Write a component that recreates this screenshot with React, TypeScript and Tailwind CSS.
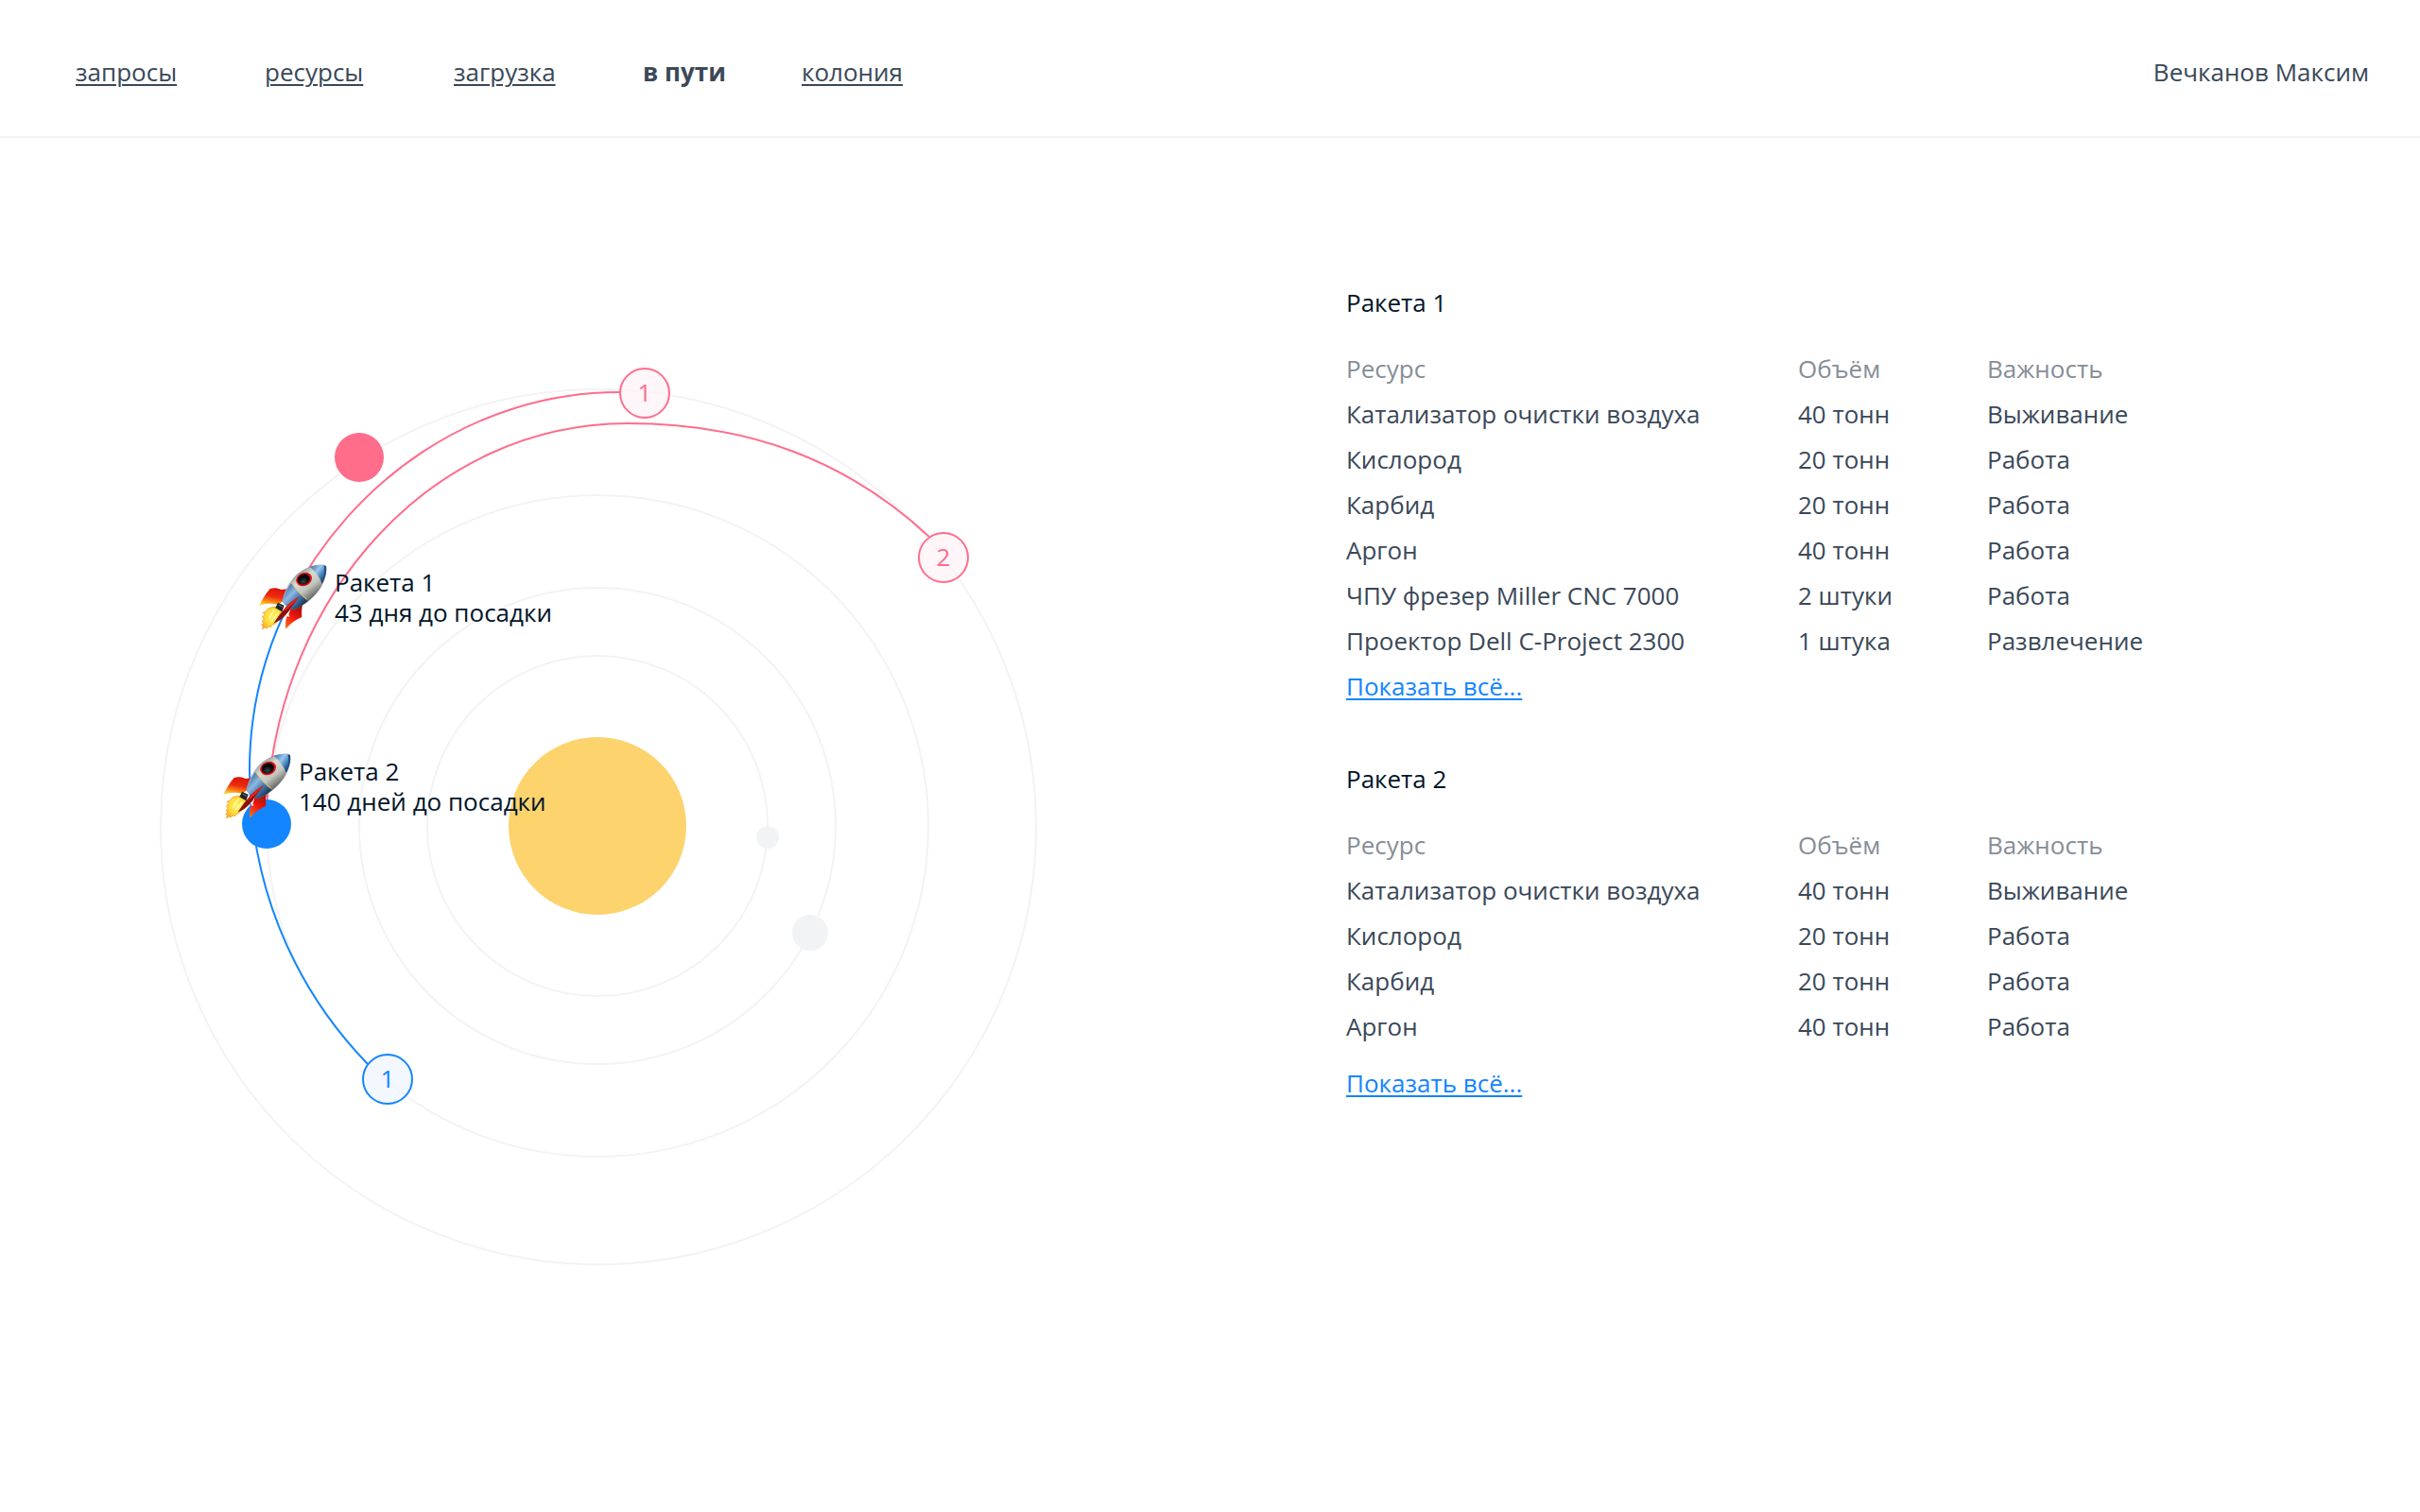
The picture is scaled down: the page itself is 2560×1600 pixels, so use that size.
type Resource = { name: string; amount: string; priority: string };

const NAV = ["запросы", "ресурсы", "загрузка", "в пути", "колония"];
const ACTIVE = "в пути";

const BASE_CARGO: Resource[] = [
  { name: "Катализатор очистки воздуха", amount: "40 тонн", priority: "Выживание" },
  { name: "Кислород", amount: "20 тонн", priority: "Работа" },
  { name: "Карбид", amount: "20 тонн", priority: "Работа" },
  { name: "Аргон", amount: "40 тонн", priority: "Работа" },
];

const EXTRA_CARGO: Resource[] = [
  { name: "ЧПУ фрезер Miller CNC 7000", amount: "2 штуки", priority: "Работа" },
  { name: "Проектор Dell C-Project 2300", amount: "1 штука", priority: "Развлечение" },
];

const ORBITS = [
  { cx: 632, cy: 874, r: 180 },
  { cx: 632, cy: 874, r: 252 },
  { cx: 632, cy: 874, r: 350 },
  { cx: 633, cy: 875, r: 463 },
];

function Header() {
  return (
    <header className="flex h-[146px] items-center justify-between border-b-2 border-[#f3f3f3] pt-2 pr-[54px] pl-20 text-[#3a4858]">
      <nav>
        <ul className="flex">
          {NAV.map((item) => (
            <li key={item} className="w-[200px] nth-4:w-[168px]">
              {item === ACTIVE ? (
                <a href="#" aria-current="page" className="font-bold">
                  {item}
                </a>
              ) : (
                <a href="#" className="underline decoration-2 underline-offset-3">
                  {item}
                </a>
              )}
            </li>
          ))}
        </ul>
      </nav>
      <p>Вечканов Максим</p>
    </header>
  );
}

function RocketDefs() {
  return (
    <defs>
      <linearGradient id="hull" x1="0.25" y1="0.2" x2="0.7" y2="0.8">
        <stop offset="0" stopColor="#8d9290" />
        <stop offset="0.3" stopColor="#d9dbd6" />
        <stop offset="0.6" stopColor="#c3c5bf" />
        <stop offset="1" stopColor="#4d504c" />
      </linearGradient>
      <linearGradient id="nose" x1="0.1" y1="0" x2="0.9" y2="0.7">
        <stop offset="0" stopColor="#3c6ea5" />
        <stop offset="0.45" stopColor="#9cc8ee" />
        <stop offset="0.7" stopColor="#4f8cc6" />
        <stop offset="1" stopColor="#1d4470" />
      </linearGradient>
      <linearGradient id="band" x1="0.1" y1="0.2" x2="0.8" y2="0.9">
        <stop offset="0" stopColor="#3f6fa3" />
        <stop offset="0.35" stopColor="#8db8e2" />
        <stop offset="0.65" stopColor="#4378ae" />
        <stop offset="1" stopColor="#15304f" />
      </linearGradient>
      <linearGradient id="finLeft" x1="0.7" y1="0" x2="0.4" y2="1">
        <stop offset="0" stopColor="#d8140c" />
        <stop offset="0.5" stopColor="#ee2a0f" />
        <stop offset="0.8" stopColor="#fb8a14" />
        <stop offset="1" stopColor="#ffd23a" />
      </linearGradient>
      <linearGradient id="finRight" x1="0.7" y1="0" x2="0.2" y2="1">
        <stop offset="0" stopColor="#a3100b" />
        <stop offset="0.5" stopColor="#f2170e" />
        <stop offset="1" stopColor="#f5701c" />
      </linearGradient>
      <radialGradient id="flame" cx="0.55" cy="0.45" r="0.6">
        <stop offset="0" stopColor="#fff36a" />
        <stop offset="0.6" stopColor="#fddc3c" />
        <stop offset="1" stopColor="#f7b02a" />
      </radialGradient>
      <radialGradient id="glass" cx="0.4" cy="0.7" r="0.7">
        <stop offset="0" stopColor="#3b4648" />
        <stop offset="0.6" stopColor="#050607" />
        <stop offset="1" stopColor="#000000" />
      </radialGradient>
    </defs>
  );
}

function Rocket({ x, y }: { x: number; y: number }) {
  return (
    <svg x={x} y={y} width="90" height="84" viewBox="0 0 270 252">
      <path
        d="M84 157 C68 156 56 162 50 172 L42 175 L48 181 L40 189 L46 195 L39 203 L45 208 L38 214 L43 218 L40 227 L49 222 L54 226 L60 219 L68 221 L72 214 L82 211 L88 203 L97 196 C104 188 106 178 104 168 Z"
        fill="url(#flame)"
        stroke="#f3951f"
        strokeWidth="2"
      />
      <path d="M80 166 C70 174 66 184 63 194 M92 174 C86 186 78 194 68 202" fill="none" stroke="#fff9a8" strokeWidth="4" />
      <path
        d="M124 99 L101 102 C88 96 76 95 65 99 C50 116 40 134 31 153 C50 145 70 144 88 149 C97 146 103 141 108 134 Z"
        fill="url(#finLeft)"
      />
      <path
        d="M168 150 C165 162 165 178 166 189 C147 196 130 210 115 227 C113 212 114 200 118 188 C124 184 128 172 130 162 Z"
        fill="url(#finRight)"
      />
      <path
        d="M243 28 C246 52 236 82 218 106 C200 130 174 152 140 165 C126 162 112 152 104 139 C108 110 126 80 148 56 C172 34 206 22 236 24 Z"
        fill="url(#hull)"
        stroke="#5f6f7e"
        strokeWidth="1"
      />
      <path d="M132 80 C120 98 109 118 104 139 C112 152 126 162 140 165 C156 159 170 150 184 138 C164 122 147 102 132 80 Z" fill="url(#band)" />
      <path d="M132 80 C147 102 164 120 182 132" fill="none" stroke="#e3c44a" strokeWidth="3" />
      <path d="M190 30 C206 24 222 22 236 24 L243 28 C245 46 240 66 229 86 C222 62 208 44 190 30 Z" fill="url(#nose)" />
      <path d="M190 30 C208 44 222 62 229 86" fill="none" stroke="#d3cfa8" strokeWidth="2" />
      <path d="M236 24 L243 28 C245 46 240 62 233 76 C238 58 239 40 236 24 Z" fill="#1e4b7b" />
      <ellipse cx="173" cy="69" rx="26" ry="21" transform="rotate(-22 173 69)" fill="#e3161a" />
      <ellipse cx="172" cy="69" rx="20" ry="16" transform="rotate(-22 172 69)" fill="url(#glass)" stroke="#5b0708" strokeWidth="2" />
      <path d="M90 143 L110 152 L103 172 L82 160 Z" fill="#20262b" />
      <path d="M92 150 L105 157" stroke="#6f7a80" strokeWidth="3" />
      <path d="M158 124 C126 140 106 166 76 209 C98 200 120 182 132 158 Z" fill="#8c0f0c" />
      <path d="M158 124 C134 136 118 154 104 174 C122 164 140 148 158 124 Z" fill="#e5201a" />
      <path d="M117 178 C121 174 126 178 124 183 C129 184 128 189 122 188 Z" fill="#ffffff" />
    </svg>
  );
}

function RocketLabel({ x, y, name, eta }: { x: number; y: number; name: string; eta: string }) {
  return (
    <text fill="#001529">
      <tspan x={x} y={y}>
        {name}
      </tspan>
      <tspan x={x} y={y + 32}>
        {eta}
      </tspan>
    </text>
  );
}

function Stop({ x, y, label, color, fill }: { x: number; y: number; label: string; color: string; fill: string }) {
  return (
    <g>
      <circle cx={x} cy={y} r="26" fill={fill} fillOpacity="0.7" stroke={color} strokeWidth="2" />
      <text x={x} y={y + 9} textAnchor="middle" fill={color}>
        {label}
      </text>
    </g>
  );
}

function SolarSystem() {
  return (
    <svg viewBox="0 146 1424 1240" className="w-full" role="img" aria-label="Карта полёта">
      <RocketDefs />
      <g fill="none" stroke="#f3f3f4" strokeWidth="2">
        {ORBITS.map((orbit) => (
          <circle key={orbit.r} {...orbit} />
        ))}
      </g>
      <circle cx="632" cy="874" r="94" fill="#fcd36d" />
      <circle cx="812" cy="886" r="12" fill="#f2f3f5" />
      <circle cx="857" cy="987" r="19" fill="#f2f3f5" />
      <circle cx="380" cy="484" r="26" fill="#ff6d8b" />

      <g fill="none" strokeWidth="2">
        <path d="M282 855 C295 625 460 448 664 448 C790 448 895 486 983 568" stroke="#ff6d8b" />
        <path d="M307 636 C371 509 502 415 655 415" stroke="#ff6d8b" />
        <path d="M389 1126 C306 1040 264 930 264 815 C264 752 279 691 307 636" stroke="#1385ff" />
      </g>
      <circle cx="282" cy="872" r="26" fill="#1385ff" />

      <Stop x={682} y={416} label="1" color="#ff6d8b" fill="#fff2f6" />
      <Stop x={998} y={590} label="2" color="#ff6d8b" fill="#fff2f6" />
      <Stop x={410} y={1142} label="1" color="#1385ff" fill="#eef5ff" />

      <Rocket x={264} y={590} />
      <Rocket x={226} y={790} />
      <RocketLabel x={354} y={626} name="Ракета 1" eta="43 дня до посадки" />
      <RocketLabel x={316} y={826} name="Ракета 2" eta="140 дней до посадки" />
    </svg>
  );
}

function Cargo({ title, rows, children }: { title: string; rows: Resource[]; children: React.ReactNode }) {
  return (
    <section>
      <h2 className="text-[#001529]">{title}</h2>
      <table className="mt-[30px] w-full table-fixed text-left text-[#3a4858]">
        <colgroup>
          <col className="w-[478px]" />
          <col className="w-[200px]" />
          <col />
        </colgroup>
        <thead className="text-[#868e97]">
          <tr className="h-12">
            <th className="font-normal">Ресурс</th>
            <th className="font-normal">Объём</th>
            <th className="font-normal">Важность</th>
          </tr>
        </thead>
        <tbody>
          {rows.map((row) => (
            <tr key={row.name} className="h-12">
              <td>{row.name}</td>
              <td>{row.amount}</td>
              <td>{row.priority}</td>
            </tr>
          ))}
        </tbody>
      </table>
      {children}
    </section>
  );
}

function ShowAll() {
  return (
    <a href="#" className="text-[#1385ff] underline decoration-2 underline-offset-3">
      Показать всё...
    </a>
  );
}

export default function App() {
  return (
    <div className="min-h-screen bg-white font-['Open_Sans',sans-serif] text-[26px] leading-8">
      <Header />
      <main className="grid grid-cols-[1424fr_1136fr]">
        <SolarSystem />
        <div className="flex flex-col gap-[66px] pt-[158px]">
          <Cargo title="Ракета 1" rows={[...BASE_CARGO, ...EXTRA_CARGO]}>
            <div className="pt-2">
              <ShowAll />
            </div>
          </Cargo>
          <Cargo title="Ракета 2" rows={BASE_CARGO}>
            <div className="pt-5">
              <ShowAll />
            </div>
          </Cargo>
        </div>
      </main>
    </div>
  );
}
